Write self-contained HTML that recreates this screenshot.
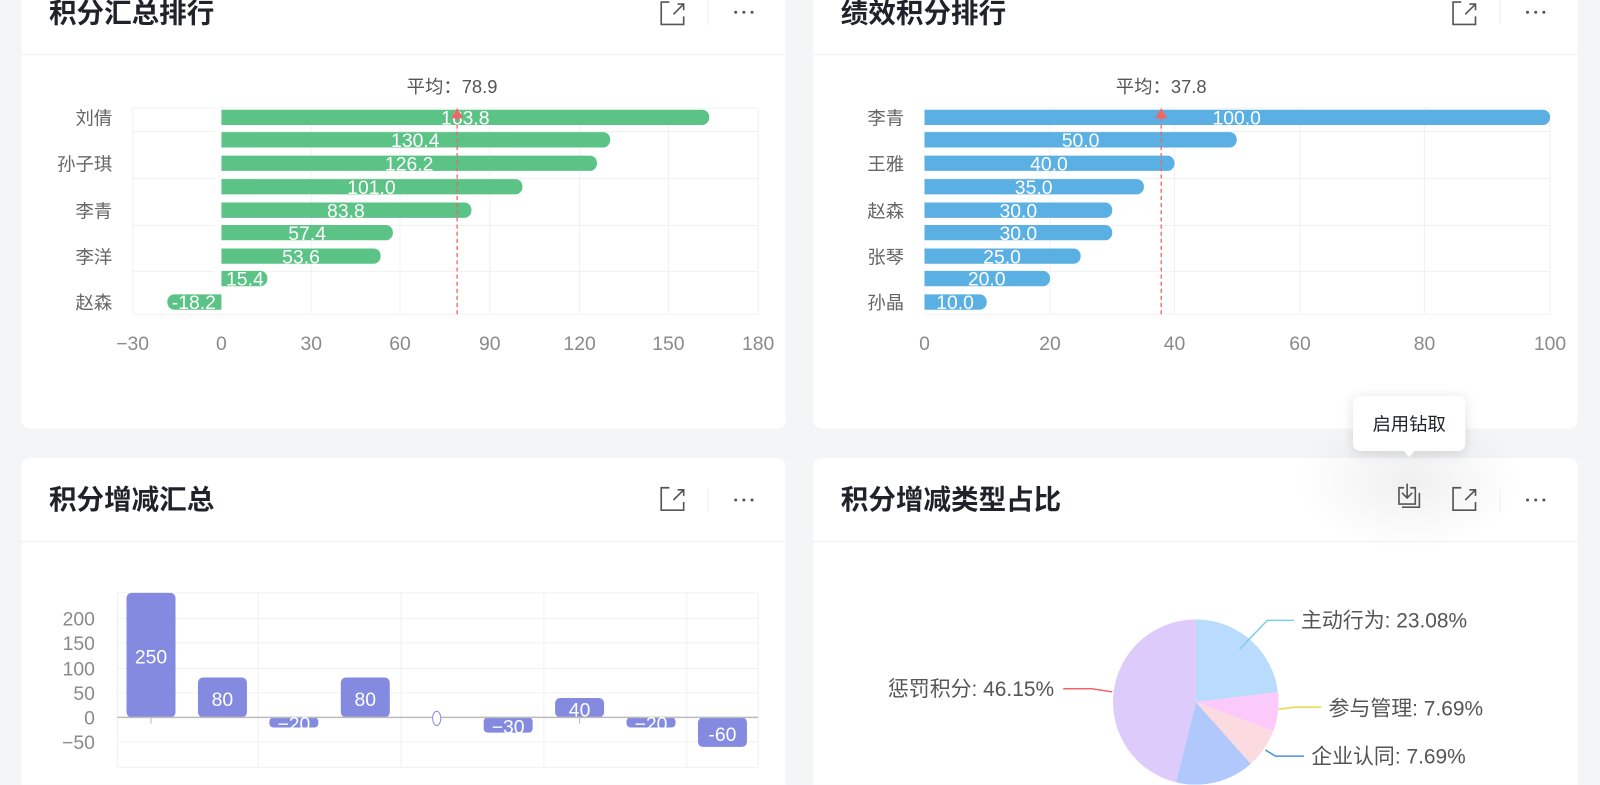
<!DOCTYPE html>
<html style="margin:0;width:1600px;height:785px;overflow:hidden"><head><meta charset="utf-8"><style>
body{margin:0;width:1600px;height:785px;overflow:hidden;background:#f4f5f7;font-family:"Liberation Sans","Noto Sans CJK SC",sans-serif;position:relative}
#root{position:absolute;left:0;top:0;width:1568px;height:769px;transform:scale(1.0204);transform-origin:0 0;overflow:hidden}
.card{position:absolute;background:#fff;border-radius:8px;width:749px}
.hd{position:absolute;left:0;right:0;top:0;height:81px;border-bottom:1px solid #eef0f3}
.t{position:absolute;left:27px;top:23px;font-size:27px;font-weight:bold;color:#1f2329;line-height:36px}
svg{position:absolute;left:0;top:0}
</style></head><body><div id="root">
<div class="card" style="left:21px;top:-28px;height:448px"><div class="hd"><div class="t">积分汇总排行</div></div></div>
<div class="card" style="left:797px;top:-28px;height:448px"><div class="hd"><div class="t">绩效积分排行</div></div></div>
<div class="card" style="left:21px;top:449px;height:330px"><div class="hd"><div class="t">积分增减汇总</div></div></div>
<div class="card" style="left:797px;top:449px;height:330px"><div class="hd"><div class="t">积分增减类型占比</div></div></div>

<svg width="1568" height="769" font-family="Liberation Sans, Noto Sans CJK SC, sans-serif">
<defs><radialGradient id="sh"><stop offset="0" stop-color="#000" stop-opacity="0.06"/><stop offset="1" stop-color="#000" stop-opacity="0"/></radialGradient></defs>
<ellipse cx="1381" cy="470" rx="110" ry="70" fill="url(#sh)"/>
<g fill="none" stroke="#555" stroke-width="1.6">
<path d="M656 2h-8v22h22v-8 M660 14l10-10 M664 4h6v6"/>
<path d="M1432 2h-8v22h22v-8 M1436 14l10-10 M1440 4h6v6"/>
<path d="M656 478h-8v22h22v-8 M660 490l10-10 M664 480h6v6"/>
<path d="M1432 478h-8v22h22v-8 M1436 490l10-10 M1440 480h6v6"/>
<path d="M1376 478h-5v16h16v-16h-5 M1379 474v13 M1374 483l5 5 5-5 M1374 497h17v-14"/>
</g>
<g fill="#555"><circle cx="721" cy="12" r="1.5"/><circle cx="729" cy="12" r="1.5"/><circle cx="737" cy="12" r="1.5"/>
<circle cx="1497" cy="12" r="1.5"/><circle cx="1505" cy="12" r="1.5"/><circle cx="1513" cy="12" r="1.5"/>
<circle cx="721" cy="490" r="1.5"/><circle cx="729" cy="490" r="1.5"/><circle cx="737" cy="490" r="1.5"/>
<circle cx="1497" cy="490" r="1.5"/><circle cx="1505" cy="490" r="1.5"/><circle cx="1513" cy="490" r="1.5"/></g>
<g stroke="#eceef1"><path d="M694 0v24 M1470 0v24 M694 478v24 M1470 478v24"/></g>

<!-- chart 1 -->
<g stroke="#f0f1f3" fill="none"><path d="M130 106H743M130 129H743M130 175H743M130 221H743M130 266H743M130 308H743 M130 106V308M305 106V308M392 106V308M480 106V308M568 106V308M655 106V308M743 106V308"/></g>
<g fill="#5bc386">
<rect x="210" y="107.5" width="485" height="15" rx="7"/>
<rect x="210" y="129.5" width="388" height="15" rx="7"/>
<rect x="210" y="152.5" width="375" height="15" rx="7"/>
<rect x="210" y="175.5" width="302" height="15" rx="7"/>
<rect x="210" y="198.5" width="252" height="15" rx="7"/>
<rect x="210" y="220.5" width="175" height="15" rx="7"/>
<rect x="210" y="243.5" width="163" height="15" rx="7"/>
<rect x="210" y="265.5" width="52" height="15" rx="7"/>
<rect x="164" y="288.5" width="60" height="15" rx="7"/></g>
<rect x="210" y="106" width="7" height="180" fill="#fff"/>
<rect x="217" y="288" width="7" height="16" fill="#fff"/>
<g fill="#fff" font-size="19" text-anchor="middle">
<text x="456" y="122">163.8</text><text x="407" y="144">130.4</text><text x="401" y="167">126.2</text><text x="364" y="190">101.0</text><text x="339" y="213">83.8</text><text x="301" y="235">57.4</text><text x="295" y="258">53.6</text><text x="240" y="280">15.4</text><text x="190" y="303">-18.2</text></g>
<path d="M448 108V310" stroke="#ee6666" stroke-dasharray="4 3" stroke-width="1.3"/><path d="M442 116l6-10 6 10z" fill="#ee6666"/>
<text x="443" y="91" font-size="18" fill="#555" text-anchor="middle">平均：78.9</text>
<g fill="#666" font-size="18" text-anchor="end"><text x="110" y="122">刘倩</text><text x="110" y="167">孙子琪</text><text x="110" y="213">李青</text><text x="110" y="258">李洋</text><text x="110" y="303">赵森</text></g>
<g fill="#8a8a8a" font-size="19" text-anchor="middle"><text x="130" y="343">−30</text><text x="217" y="343">0</text><text x="305" y="343">30</text><text x="392" y="343">60</text><text x="480" y="343">90</text><text x="568" y="343">120</text><text x="655" y="343">150</text><text x="743" y="343">180</text></g>

<!-- chart 2 -->
<g stroke="#f0f1f3" fill="none"><path d="M906 106H1519M906 129H1519M906 175H1519M906 221H1519M906 266H1519M906 308H1519 M906 106V308M1029 106V308M1151 106V308M1274 106V308M1396 106V308M1519 106V308"/></g>
<g fill="#5aafe3">
<rect x="899" y="107.5" width="620" height="15" rx="7"/>
<rect x="899" y="129.5" width="313" height="15" rx="7"/>
<rect x="899" y="152.5" width="252" height="15" rx="7"/>
<rect x="899" y="175.5" width="222" height="15" rx="7"/>
<rect x="899" y="198.5" width="191" height="15" rx="7"/>
<rect x="899" y="220.5" width="191" height="15" rx="7"/>
<rect x="899" y="243.5" width="160" height="15" rx="7"/>
<rect x="899" y="265.5" width="130" height="15" rx="7"/>
<rect x="899" y="288.5" width="68" height="15" rx="7"/></g>
<rect x="896" y="104" width="10" height="204" fill="#fff"/>
<g fill="#fff" font-size="19" text-anchor="middle">
<text x="1212" y="122">100.0</text><text x="1059" y="144">50.0</text><text x="1028" y="167">40.0</text><text x="1013" y="190">35.0</text><text x="998" y="213">30.0</text><text x="998" y="235">30.0</text><text x="982" y="258">25.0</text><text x="967" y="280">20.0</text><text x="936" y="303">10.0</text></g>
<path d="M1138 108V310" stroke="#ee6666" stroke-dasharray="4 3" stroke-width="1.3"/><path d="M1132 116l6-10 6 10z" fill="#ee6666"/>
<text x="1138" y="91" font-size="18" fill="#555" text-anchor="middle">平均：37.8</text>
<g fill="#666" font-size="18" text-anchor="end"><text x="886" y="122">李青</text><text x="886" y="167">王雅</text><text x="886" y="213">赵森</text><text x="886" y="258">张琴</text><text x="886" y="303">孙晶</text></g>
<g fill="#8a8a8a" font-size="19" text-anchor="middle"><text x="906" y="343">0</text><text x="1029" y="343">20</text><text x="1151" y="343">40</text><text x="1274" y="343">60</text><text x="1396" y="343">80</text><text x="1519" y="343">100</text></g>

<!-- chart 3 -->
<g stroke="#f0f1f3" fill="none"><path d="M115 581H743M115 606H743M115 630H743M115 655H743M115 679H743M115 727H743M115 752H743 M115 581V752M253 581V752M393 581V752M533 581V752M673 581V752M743 581V752"/></g>
<g fill="#838ae0">
<rect x="124" y="581" width="48" height="122" rx="5"/>
<rect x="194" y="664" width="48" height="39" rx="5"/>
<rect x="264" y="703" width="48" height="10" rx="4"/>
<rect x="334" y="664" width="48" height="39" rx="5"/>
<rect x="474" y="703" width="48" height="15" rx="4"/>
<rect x="544" y="684" width="48" height="19" rx="5"/>
<rect x="614" y="703" width="48" height="10" rx="4"/>
<rect x="684" y="703" width="48" height="29" rx="5"/></g>
<path d="M115 703H743" stroke="#bbb" stroke-width="1.5"/>
<path d="M148 703v6M568 703v6" stroke="#bbb"/>
<g fill="#fff" font-size="19" text-anchor="middle"><text x="148" y="650">250</text><text x="218" y="692">80</text><text x="288" y="716">−20</text><text x="358" y="692">80</text><text x="498" y="719">−30</text><text x="568" y="702">40</text><text x="638" y="716">−20</text><text x="708" y="726">-60</text></g>
<ellipse cx="428" cy="704" rx="4" ry="7" fill="#fff" stroke="#838ae0"/>
<g fill="#8a8a8a" font-size="19" text-anchor="end"><text x="93" y="613">200</text><text x="93" y="637">150</text><text x="93" y="662">100</text><text x="93" y="686">50</text><text x="93" y="710">0</text><text x="93" y="734">−50</text></g>

<!-- pie -->
<path d="M1172 688L1172 607A81 81 0 0 1 1252.4 678.3Z" fill="#b9dcfd"/>
<path d="M1172 688L1252.4 678.3A81 81 0 0 1 1247.7 716.7Z" fill="#fcc9fb"/>
<path d="M1172 688L1247.7 716.7A81 81 0 0 1 1225.7 748.6Z" fill="#fbdbdf"/>
<path d="M1172 688L1225.7 748.6A81 81 0 0 1 1152.6 766.7Z" fill="#b1c8fc"/>
<path d="M1172 688L1152.6 766.7A81 81 0 0 1 1172 607Z" fill="#dccbfb"/>
<g fill="none" stroke-width="1.5"><path d="M1215 636L1242 608H1268" stroke="#7fcde3"/><path d="M1253 695L1270 693H1295" stroke="#e8d84a"/><path d="M1240 735L1250 741H1278" stroke="#4a90e2"/><path d="M1042 675H1070L1090 678" stroke="#ee6666"/></g>
<g fill="#555" font-size="20.5"><text x="1275" y="615">主动行为: 23.08%</text><text x="1302" y="701">参与管理: 7.69%</text><text x="1285" y="748">企业认同: 7.69%</text><text x="1033" y="682" text-anchor="end">惩罚积分: 46.15%</text></g>

<!-- tooltip -->
<rect x="1326" y="388" width="110" height="54" rx="7" fill="#fff" style="filter:drop-shadow(0 2px 6px rgba(0,0,0,.12))"/>
<path d="M1375 441l6 7 6-7z" fill="#fff"/>
<text x="1381" y="422" font-size="18" fill="#1f2329" text-anchor="middle">启用钻取</text>
</svg>
</div></body></html>
